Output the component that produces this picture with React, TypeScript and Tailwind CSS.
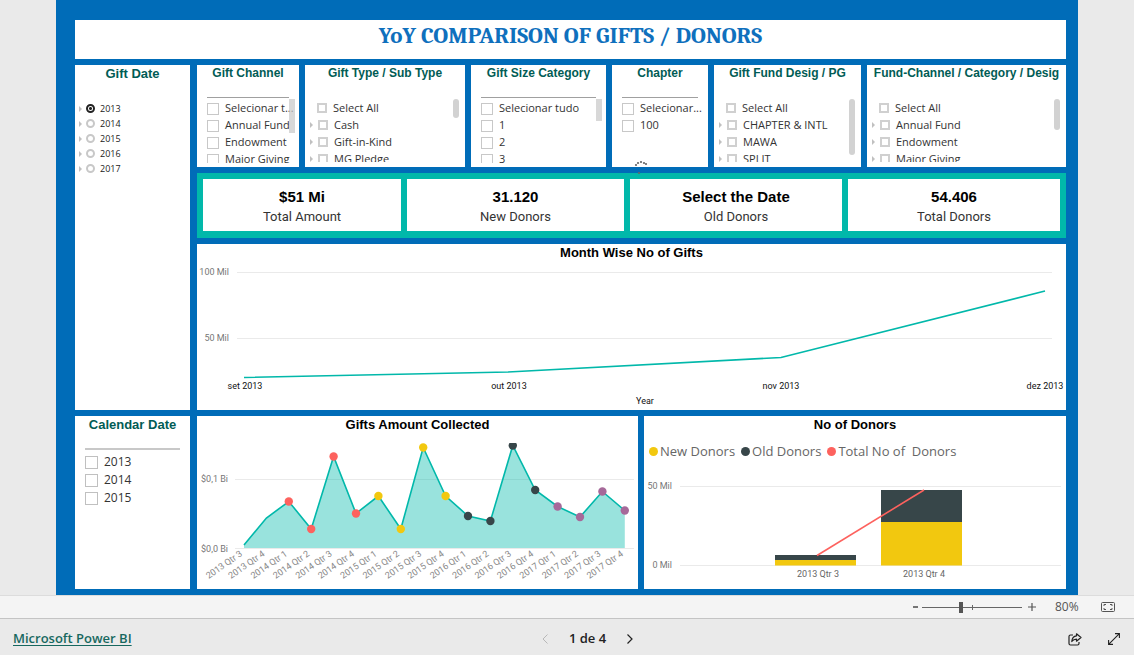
import React, { useState } from "react";

const TEAL = "#01b8aa";
const RED = "#fd625e";
const YELLOW = "#f2c80f";
const DARK = "#374649";
const PURPLE = "#a66999";

type SlicerProps = {
  title: string;
  items: string[];
  thumb?: string;
};

function FlatSlicer({ title, items, thumb, children }: SlicerProps & { children?: React.ReactNode }) {
  return (
    <section className="relative min-w-0 bg-white">
      <h2 className="h-4 text-center text-xs leading-4 font-bold whitespace-nowrap text-[#015c55]">{title}</h2>
      <div className="mx-2.5 h-[17px] border-b border-[#a0a0a0]" />
      <ul className="mt-[2px] mr-1 ml-2.5 h-[63px] overflow-hidden">
        {items.map((item) => (
          <li key={item}>
            <label className="flex h-[17px] items-center gap-1.5 font-['Open_Sans',sans-serif] text-[11px] whitespace-nowrap text-[#333]">
              <input type="checkbox" className="size-3 shrink-0 appearance-none border border-[#c8c8c8] bg-white checked:bg-[#333]" />
              {item}
            </label>
          </li>
        ))}
      </ul>
      {thumb && <div className={"absolute top-[34px] right-1 w-1.5 bg-[#c8c8c8]/70 " + thumb} />}
      {children}
    </section>
  );
}

function Caret() {
  return (
    <svg viewBox="0 0 3 6" className="h-1.5 w-[3px] shrink-0" aria-hidden="true">
      <path d="M0 0 L3 3 L0 6 Z" fill="#c0c0c0" />
    </svg>
  );
}

function TreeSlicer({ title, items, thumb }: SlicerProps) {
  return (
    <section className="relative min-w-0 bg-white">
      <h2 className="h-4 text-center text-xs leading-4 font-bold whitespace-nowrap text-[#015c55]">{title}</h2>
      <ul className="mr-3 ml-[5px] mt-[18px] h-[63px] overflow-hidden">
        {items.map((item, i) => (
          <li key={item} className="flex h-[17px] items-center gap-[5px]">
            {i > 0 ? <Caret /> : <span className="w-[2px]" />}
            <label className="flex items-center gap-1.5 font-['Open_Sans',sans-serif] text-[11px] leading-[17px] whitespace-nowrap text-[#333]">
              <input type="checkbox" className="size-2.5 shrink-0 appearance-none border-2 border-[#d0d0d0] bg-white checked:bg-[#333]" />
              {item}
            </label>
          </li>
        ))}
      </ul>
      <div className={"absolute top-[34px] right-1.5 w-1.5 rounded-full bg-[#d2d2d2] " + (thumb ?? "")} />
    </section>
  );
}

function Spinner() {
  const dots = [
    [2, 6],
    [4, 4],
    [7, 3],
    [10, 4],
    [12, 5],
    [5, 14],
  ];
  return (
    <svg viewBox="0 0 14 16" className="absolute -bottom-2 left-[22px] h-4 w-3.5" aria-hidden="true">
      {dots.map(([x, y]) => (
        <circle key={x} cx={x} cy={y} r="1.1" fill="#666" />
      ))}
    </svg>
  );
}

function Kpi({ value, label }: { value: string; label: string }) {
  return (
    <div className="flex min-w-0 flex-col items-center justify-center bg-white pt-[3px]">
      <strong className="text-[15px] leading-5 font-bold text-black">{value}</strong>
      <span className="font-[Roboto,sans-serif] text-[13px] leading-5 text-[#333]">{label}</span>
    </div>
  );
}

function PanelTitle({ children }: { children: React.ReactNode }) {
  return <h2 className="h-[18px] text-center text-[13px] leading-[18px] font-bold text-black">{children}</h2>;
}

const AXIS = "font-[Roboto,sans-serif] text-[9px]";

function GiftsByMonth() {
  const labels: [number, string][] = [
    [48, "set 2013"],
    [312, "out 2013"],
    [584, "nov 2013"],
    [848, "dez 2013"],
  ];
  return (
    <svg viewBox="0 0 869 148" className="block w-full" role="img" aria-label="Month Wise No of Gifts">
      <path d="M40 10.5H855M40 76.5H855" stroke="#eaeaea" />
      <g className={AXIS} fill="#777" textAnchor="end">
        <text x="32" y="13">100 Mil</text>
        <text x="32" y="79">50 Mil</text>
      </g>
      <polyline points="47,115.5 311,110 584,95.5 848,29" fill="none" stroke={TEAL} strokeWidth="1.6" />
      <g className={AXIS} fill="#111" textAnchor="middle">
        {labels.map(([x, t]) => (
          <text key={t} x={x} y="127">{t}</text>
        ))}
        <text x="448" y="142">Year</text>
      </g>
    </svg>
  );
}

const amounts: [string, number, string | null][] = [
  ["2013 Qtr 3", 111, null],
  ["2013 Qtr 4", 84, null],
  ["2014 Qtr 1", 67.5, RED],
  ["2014 Qtr 2", 95, RED],
  ["2014 Qtr 3", 22.5, RED],
  ["2014 Qtr 4", 79.5, RED],
  ["2015 Qtr 1", 62, YELLOW],
  ["2015 Qtr 2", 95, YELLOW],
  ["2015 Qtr 3", 13.5, YELLOW],
  ["2015 Qtr 4", 62, YELLOW],
  ["2016 Qtr 1", 82, DARK],
  ["2016 Qtr 2", 87, DARK],
  ["2016 Qtr 3", 11.5, DARK],
  ["2016 Qtr 4", 56, DARK],
  ["2017 Qtr 1", 72.5, PURPLE],
  ["2017 Qtr 2", 83, PURPLE],
  ["2017 Qtr 3", 57.5, PURPLE],
  ["2017 Qtr 4", 76.5, PURPLE],
];

function AmountCollected() {
  const px = (i: number) => 47 + i * 22.4;
  const line = amounts.map(([, y], i) => px(i) + "," + y).join(" ");
  return (
    <svg viewBox="0 0 441 155" className="block w-full" role="img" aria-label="Gifts Amount Collected">
      <clipPath id="plot">
        <rect x="38" y="9" width="403" height="110" />
      </clipPath>
      <path d="M38 45.5H437M38 114.5H437" stroke="#eaeaea" />
      <g className={AXIS} fill="#777" textAnchor="end">
        <text x="31" y="48">$0,1 Bi</text>
        <text x="31" y="118">$0,0 Bi</text>
      </g>
      <g clipPath="url(#plot)">
        <polygon points={"47,114 " + line + " 427.8,114"} fill={TEAL} fillOpacity="0.4" />
        <polyline points={line} fill="none" stroke={TEAL} strokeWidth="1.6" />
        {amounts.map(([q, y, c], i) => c && <circle key={q} cx={px(i)} cy={y} r="4.2" fill={c} />)}
      </g>
      <g className={AXIS} fill="#888" textAnchor="end">
        {amounts.map(([q], i) => (
          <text key={q} transform={"translate(" + (px(i) - 1) + " 121) rotate(-35)"}>{q}</text>
        ))}
      </g>
    </svg>
  );
}

function Donors() {
  return (
    <svg viewBox="0 0 422 127" className="block w-full" role="img" aria-label="No of Donors">
      <path d="M36 24.5H417M36 103.5H417" stroke="#eaeaea" />
      <g className={AXIS} fill="#777" textAnchor="end">
        <text x="28" y="27">50 Mil</text>
        <text x="28" y="106">0 Mil</text>
      </g>
      <rect x="131" y="93" width="81" height="5" fill={DARK} />
      <rect x="131" y="98" width="81" height="5.5" fill={YELLOW} />
      <rect x="237" y="28" width="81" height="32" fill={DARK} />
      <rect x="237" y="60" width="81" height="43.5" fill={YELLOW} />
      <path d="M173 93.5L280 28" stroke={RED} strokeWidth="1.6" />
      <g className={AXIS} fill="#666" textAnchor="middle">
        <text x="174" y="115">2013 Qtr 3</text>
        <text x="280" y="115">2013 Qtr 4</text>
      </g>
    </svg>
  );
}

const giftYears = ["2013", "2014", "2015", "2016", "2017"];
const calendarYears = ["2013", "2014", "2015"];
const legend = [
  { name: "New Donors", dot: "bg-[#f2c80f]" },
  { name: "Old Donors", dot: "bg-[#374649]" },
  { name: "Total No of  Donors", dot: "bg-[#fd625e]" },
];

export default function App() {
  const [zoom, setZoom] = useState(39);
  return (
    <div className="flex min-h-screen flex-col bg-[#eaeaea] font-['Liberation_Sans',Arial,sans-serif]">
      <main className="mx-14 flex grow flex-col gap-1.5 bg-[#006cb8] pt-5 pr-3 pb-1.5 pl-[19px]">
        <h1 className="h-[39px] bg-white text-center font-[Cambria,Caladea,'DejaVu_Serif_Condensed','Liberation_Serif',serif] text-[23px] leading-8 font-semibold text-[#0f70bd]">
          YoY COMPARISON OF GIFTS / DONORS
        </h1>

        <div className="flex grow gap-[7px]">
          <aside className="flex w-[115px] shrink-0 flex-col gap-1.5">
            <fieldset className="grow bg-white">
              <legend className="float-left h-9 w-full text-center text-[13px] leading-[17px] font-bold text-[#015c55]">Gift Date</legend>
              <ul className="clear-both ml-1">
                {giftYears.map((year, i) => (
                  <li key={year} className="flex h-[15px] items-center gap-1">
                    <Caret />
                    <label className="flex items-center gap-[5px] font-['Open_Sans',sans-serif] text-[9px] leading-[15px] text-[#222]">
                      <input
                        type="radio"
                        name="gift-year"
                        defaultChecked={i === 0}
                        className="size-[9px] appearance-none rounded-full border-2 border-[#c8c8c8] bg-white checked:border-[#222] checked:bg-[radial-gradient(#222_0_1px,#fff_2px)]"
                      />
                      {year}
                    </label>
                  </li>
                ))}
              </ul>
            </fieldset>
            <section className="h-[173px] bg-white">
              <h2 className="h-[18px] text-center text-[13px] leading-[18px] font-bold text-[#015c55]">Calendar Date</h2>
              <div className="mx-2.5 mb-[3px] h-4 border-b-2 border-[#c8c8c8]" />
              <ul className="mx-2.5">
                {calendarYears.map((year) => (
                  <li key={year}>
                    <label className="flex h-[18px] items-center gap-1.5 font-['Open_Sans',sans-serif] text-xs text-[#333]">
                      <input type="checkbox" className="size-[13px] appearance-none border border-[#c0c0c0] bg-white checked:bg-[#333]" />
                      {year}
                    </label>
                  </li>
                ))}
              </ul>
            </section>
          </aside>

          <div className="flex min-w-0 grow flex-col gap-1.5">
            <div className="grid h-[102px] grid-cols-[102fr_160fr_135fr_96fr_147fr_199fr] gap-1.5">
              <FlatSlicer title="Gift Channel" items={["Selecionar t...", "Annual Fund", "Endowment", "Major Giving"]} thumb="h-[34px]" />
              <TreeSlicer title="Gift Type / Sub Type" items={["Select All", "Cash", "Gift-in-Kind", "MG Pledge"]} thumb="h-[19px]" />
              <FlatSlicer title="Gift Size Category" items={["Selecionar tudo", "1", "2", "3"]} thumb="h-[22px]" />
              <FlatSlicer title="Chapter" items={["Selecionar...", "100"]}>
                <Spinner />
              </FlatSlicer>
              <TreeSlicer title="Gift Fund Desig / PG" items={["Select All", "CHAPTER & INTL", "MAWA", "SPLIT"]} thumb="h-14" />
              <TreeSlicer title="Fund-Channel / Category / Desig" items={["Select All", "Annual Fund", "Endowment", "Major Giving"]} thumb="h-[31px]" />
            </div>

            <div className="grid h-[65px] grid-cols-[198fr_217fr_212fr_212fr] gap-1.5 bg-[#01b8aa] px-1.5 pt-1.5 pb-[7px]">
              <Kpi value="$51 Mi" label="Total Amount" />
              <Kpi value="31.120" label="New Donors" />
              <Kpi value="Select the Date" label="Old Donors" />
              <Kpi value="54.406" label="Total Donors" />
            </div>

            <section className="grow bg-white">
              <PanelTitle>Month Wise No of Gifts</PanelTitle>
              <GiftsByMonth />
            </section>

            <div className="grid grid-cols-[441fr_422fr] gap-1.5">
              <section className="min-w-0 bg-white">
                <PanelTitle>Gifts Amount Collected</PanelTitle>
                <AmountCollected />
              </section>
              <section className="min-w-0 bg-white">
                <PanelTitle>No of Donors</PanelTitle>
                <ul className="flex h-7 items-center gap-1.5 pt-1.5 pl-[5px]">
                  {legend.map((l) => (
                    <li key={l.name} className="flex items-center gap-0.5 font-['Open_Sans',sans-serif] text-[13px] leading-5 whitespace-pre text-[#666]">
                      <span className={"size-[9px] rounded-full " + l.dot} />
                      {l.name}
                    </li>
                  ))}
                </ul>
                <Donors />
              </section>
            </div>
          </div>
        </div>
      </main>

      <div className="flex h-6 items-center justify-end border-t border-b border-t-[#dcdcdc] border-b-[#c4c4c4] bg-[#f4f4f4] pr-[19px] font-['Open_Sans',sans-serif] text-[#555]">
        <button type="button" aria-label="Zoom out" className="flex h-5 w-[13px] items-center justify-center">
          <svg viewBox="0 0 5 2" className="h-0.5 w-[5px]"><path d="M0 1H5" stroke="#555" strokeWidth="1.6" /></svg>
        </button>
        <div className="relative flex items-center">
          <input
            type="range"
            aria-label="Zoom"
            min={0}
            max={100}
            value={zoom}
            onChange={(e) => setZoom(Number(e.target.value))}
            className="h-3 w-[100px] appearance-none bg-[linear-gradient(#666,#666)] bg-[length:100%_1px] bg-center bg-no-repeat [&::-webkit-slider-thumb]:h-[11px] [&::-webkit-slider-thumb]:w-1 [&::-webkit-slider-thumb]:appearance-none [&::-webkit-slider-thumb]:bg-[#555]"
          />
          <span className="pointer-events-none absolute left-1/2 h-[5px] w-px bg-[#666]" />
        </div>
        <button type="button" aria-label="Zoom in" className="flex h-5 w-5 items-center justify-center">
          <svg viewBox="0 0 8 8" className="size-2"><path d="M0 4H8M4 0V8" stroke="#555" strokeWidth="1.2" /></svg>
        </button>
        <span className="w-[59px] pl-[13px] text-xs">80%</span>
        <button type="button" aria-label="Fit to page">
          <svg viewBox="0 0 14 10" className="h-2.5 w-3.5" fill="none" stroke="#555">
            <rect x="0.5" y="0.5" width="13" height="9" rx="1" />
            <path d="M3 4V2.5H5M9 2.5H11V4M11 6V7.500H9M5 7.500H3V6" />
          </svg>
        </button>
      </div>

      <footer className="grid h-9 grid-cols-[1fr_auto_1fr] items-center pt-1 pr-3.5 pl-[13px] font-['Open_Sans',sans-serif]">
        <a href="https://powerbi.microsoft.com" className="justify-self-start text-[13px] font-semibold text-[#17685f] underline underline-offset-2">
          Microsoft Power BI
        </a>
        <nav className="mr-[-42px] flex items-center gap-[21px]">
          <button type="button" aria-label="Previous page" disabled>
            <svg viewBox="0 0 6 10" className="h-2.5 w-1.5" fill="none" stroke="#b8b8b8"><path d="M5.5 0.5L1 5L5.5 9.5" /></svg>
          </button>
          <span className="text-[13px] font-semibold text-[#222]">1 de 4</span>
          <button type="button" aria-label="Next page">
            <svg viewBox="0 0 6 10" className="h-2.5 w-1.5" fill="none" stroke="#222" strokeWidth="1.2"><path d="M0.5 0.5L5 5L0.5 9.5" /></svg>
          </button>
        </nav>
        <div className="flex items-center gap-[26px] justify-self-end">
          <button type="button" aria-label="Share">
            <svg viewBox="0 0 14 13" className="h-[13px] w-3.5" fill="none" stroke="#222" strokeWidth="1.2" strokeLinejoin="round">
              <path d="M5 2H2.500Q1 2 1 3.500V10.500Q1 12 2.500 12H9.500Q11 12 11 10.500V9" />
              <path d="M8.500 0.800L13 4.500L8.500 8.200V6.200Q5.500 6.200 3.800 8.500Q4.200 3.200 8.500 2.800Z" />
            </svg>
          </button>
          <button type="button" aria-label="Full screen">
            <svg viewBox="0 0 12 12" className="size-3" fill="none" stroke="#222" strokeWidth="1.1">
              <path d="M7 0.600H11.400V5M5 11.400H0.600V7M11.400 0.600L0.600 11.400" />
            </svg>
          </button>
        </div>
      </footer>
    </div>
  );
}
